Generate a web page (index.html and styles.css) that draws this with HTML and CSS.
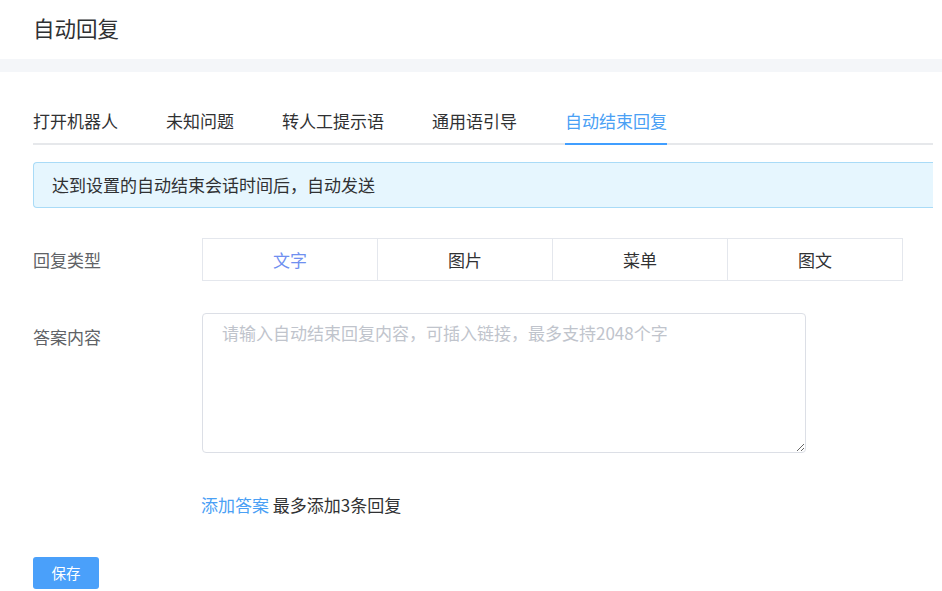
FILE: index.html
```html
<!DOCTYPE html>
<html lang="zh-CN">
<head>
<meta charset="utf-8">
<title>自动回复</title>
<link rel="stylesheet" href="styles.css">
</head>
<body>
<header class="header">
  <h1 class="title">自动回复</h1>
</header>
<div class="band"></div>
<main class="content">
  <nav class="tabs">
    <span class="tab">打开机器人</span>
    <span class="tab">未知问题</span>
    <span class="tab">转人工提示语</span>
    <span class="tab">通用语引导</span>
    <span class="tab active">自动结束回复</span>
  </nav>
  <div class="alert">达到设置的自动结束会话时间后，自动发送</div>
  <div class="row row-type">
    <div class="label">回复类型</div>
    <div class="seg">
      <span class="seg-item on">文字</span>
      <span class="seg-item">图片</span>
      <span class="seg-item">菜单</span>
      <span class="seg-item">图文</span>
    </div>
  </div>
  <div class="row row-answer">
    <div class="label label-top">答案内容</div>
    <textarea class="answer" placeholder="请输入自动结束回复内容，可插入链接，最多支持2048个字"></textarea>
  </div>
  <div class="add-line"><a class="add-link">添加答案</a> 最多添加3条回复</div>
  <button class="save">保存</button>
</main>
</body>
</html>
```
FILE: styles.css
```css
* { box-sizing: border-box; }
html, body { margin: 0; padding: 0; background: #fff; }
body {
  font-family: "Noto Sans CJK SC", "Noto Sans", sans-serif;
  color: #303133;
  width: 942px;
  overflow: hidden;
}
.header {
  height: 59px;
  padding-left: 33px;
  display: flex;
  align-items: center;
}
.title {
  margin: 0;
  font-size: 21.5px;
  font-weight: 400;
  line-height: 30px;
  color: #303133;
  margin-top: -4px;
}
.band {
  height: 13px;
  background: #f4f6f9;
}
.content {
  padding: 0 9px 0 33px;
}
.tabs {
  margin-top: 26px;
  display: flex;
  gap: 48px;
  border-bottom: 2px solid #e6e8eb;
}
.tab {
  position: relative;
  font-size: 17px;
  line-height: 45px;
  height: 45px;
  color: #303133;
  white-space: nowrap;
}
.tab.active { color: #4aa0f5; }
.tab.active::after {
  content: "";
  position: absolute;
  left: 0; right: 0; bottom: -2px;
  height: 2px;
  background: #409eff;
}
.alert {
  margin-top: 17px;
  height: 46px;
  border: 1px solid #a9dbf7;
  border-right: 0;
  border-radius: 4px 0 0 4px;
  background: #e6f6fe;
  padding-left: 18px;
  font-size: 17px;
  line-height: 44px;
  color: #303133;
}
.row { display: flex; }
.row-type { margin-top: 30px; align-items: center; }
.label {
  width: 169px;
  flex: none;
  font-size: 17px;
  line-height: 22px;
  color: #606266;
}
.seg {
  display: flex;
  width: 701px;
  height: 43px;
  border: 1px solid #e4e7ed;
}
.seg-item {
  flex: 1;
  text-align: center;
  font-size: 17px;
  line-height: 41px;
  color: #303133;
  border-left: 1px solid #e4e7ed;
}
.seg-item:first-child { border-left: 0; }
.seg-item.on { color: #6f8ff0; }
.row-answer { margin-top: 32px; align-items: flex-start; }
.label-top { margin-top: 13px; }
.answer {
  width: 604px;
  height: 140px;
  border: 1px solid #dcdfe6;
  border-radius: 4px;
  padding: 8px 19px;
  font-family: "Noto Sans CJK SC", "Noto Sans", sans-serif;
  font-size: 17px;
  line-height: 22px;
  color: #303133;
  resize: vertical;
  outline: none;
}
.answer::placeholder { color: #c0c4cc; }
.add-line {
  margin-top: 40px;
  margin-left: 168px;
  font-size: 17px;
  line-height: 24px;
  color: #303133;
}
.add-link { color: #4aa0f5; cursor: pointer; }
.save {
  display: block;
  margin-top: 40px;
  width: 66px;
  height: 32px;
  border: 0;
  border-radius: 3px;
  background: #4aa0fa;
  color: #fff;
  font-family: "Noto Sans CJK SC", "Noto Sans", sans-serif;
  font-size: 14.5px;
  line-height: 32px;
  padding: 0;
}
```
